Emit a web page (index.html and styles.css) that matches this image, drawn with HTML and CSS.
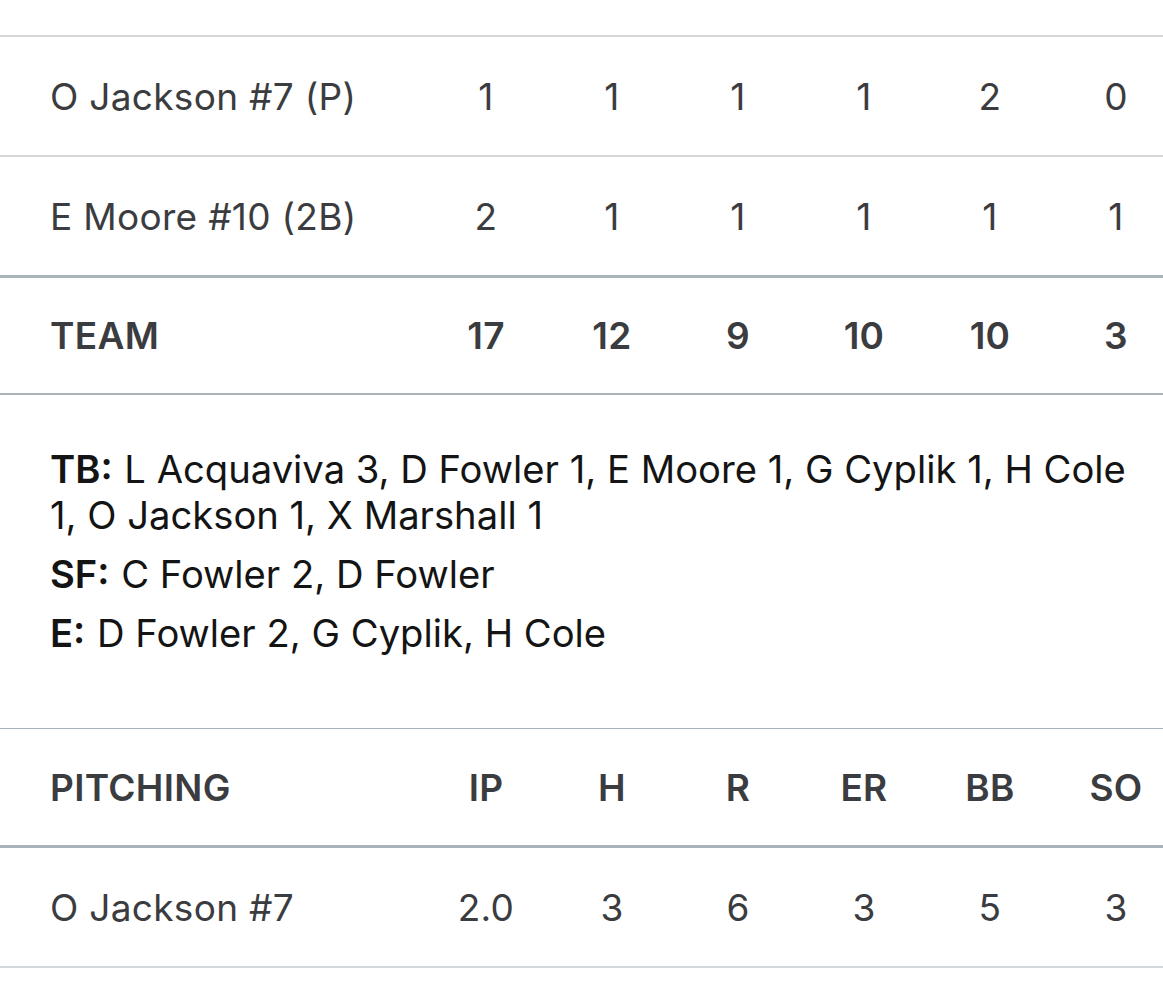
FILE: index.html
```html
<!DOCTYPE html>
<html>
<head>
<meta charset="utf-8">
<link rel="stylesheet" href="styles.css">
</head>
<body>
<div class="page">
  <table class="stats batting">
    <tbody>
      <tr class="row first">
        <td class="name">O Jackson #7 (P)</td>
        <td>1</td><td>1</td><td>1</td><td>1</td><td>2</td><td>0</td>
      </tr>
      <tr class="row last">
        <td class="name">E Moore #10 (2B)</td>
        <td>2</td><td>1</td><td>1</td><td>1</td><td>1</td><td>1</td>
      </tr>
      <tr class="row total">
        <td class="name">TEAM</td>
        <td>17</td><td>12</td><td>9</td><td>10</td><td>10</td><td>3</td>
      </tr>
    </tbody>
  </table>

  <div class="notes">
    <p><b>TB:</b> L Acquaviva 3, D Fowler 1, E Moore 1, G Cyplik 1, H Cole 1, O Jackson 1, X Marshall 1</p>
    <p><b>SF:</b> C Fowler 2, D Fowler</p>
    <p><b>E:</b> D Fowler 2, G Cyplik, H Cole</p>
  </div>

  <table class="stats pitching">
    <thead>
      <tr class="head">
        <th class="name">PITCHING</th>
        <th>IP</th><th>H</th><th>R</th><th>ER</th><th>BB</th><th>SO</th>
      </tr>
    </thead>
    <tbody>
      <tr class="row plast">
        <td class="name">O Jackson #7</td>
        <td>2.0</td><td>3</td><td>6</td><td>3</td><td>5</td><td>3</td>
      </tr>
    </tbody>
  </table>
</div>
</body>
</html>
```

FILE: styles.css
```css
html, body {
  margin: 0;
  padding: 0;
  background: #ffffff;
  overflow: hidden;
}

body {
  font-family: Inter, "Noto Sans", "Liberation Sans", sans-serif;
  color: #3b3c40;
}

.page {
  width: 1178px;
  padding-top: 35px;
}

.stats {
  width: 1178px;
  border-collapse: collapse;
  table-layout: fixed;
}

.stats td,
.stats th {
  width: 126px;
  padding: 0;
  text-align: center;
  font-size: 37px;
  font-weight: 400;
  letter-spacing: 0.3px;
}

.stats .name {
  width: 373px;
  padding-left: 50px;
  text-align: left;
}

.row td {
  height: 118px;
}

.batting .first td {
  border-top: 2px solid #d6d8da;
  border-bottom: 2px solid #d6d8da;
}

.batting .last td {
  border-bottom: 3px solid #a8b3ba;
}

.batting .total td {
  height: 115px;
  font-weight: 600;
  border-bottom: 2px solid #a8b3ba;
}

.notes {
  height: 333px;
  box-sizing: border-box;
  padding: 51px 30px 0 50px;
  color: #141414;
  font-size: 38.2px;
  line-height: 46px;
}

.notes p {
  margin: 0 0 13px 0;
}

.notes b {
  font-weight: 600;
  margin-right: 1px;
}

.pitching .head th {
  height: 116px;
  font-weight: 600;
  border-top: 1px solid #a8b3ba;
  border-bottom: 3px solid #a8b3ba;
}

.pitching .plast td {
  border-bottom: 2px solid #d2d8dc;
}
```
